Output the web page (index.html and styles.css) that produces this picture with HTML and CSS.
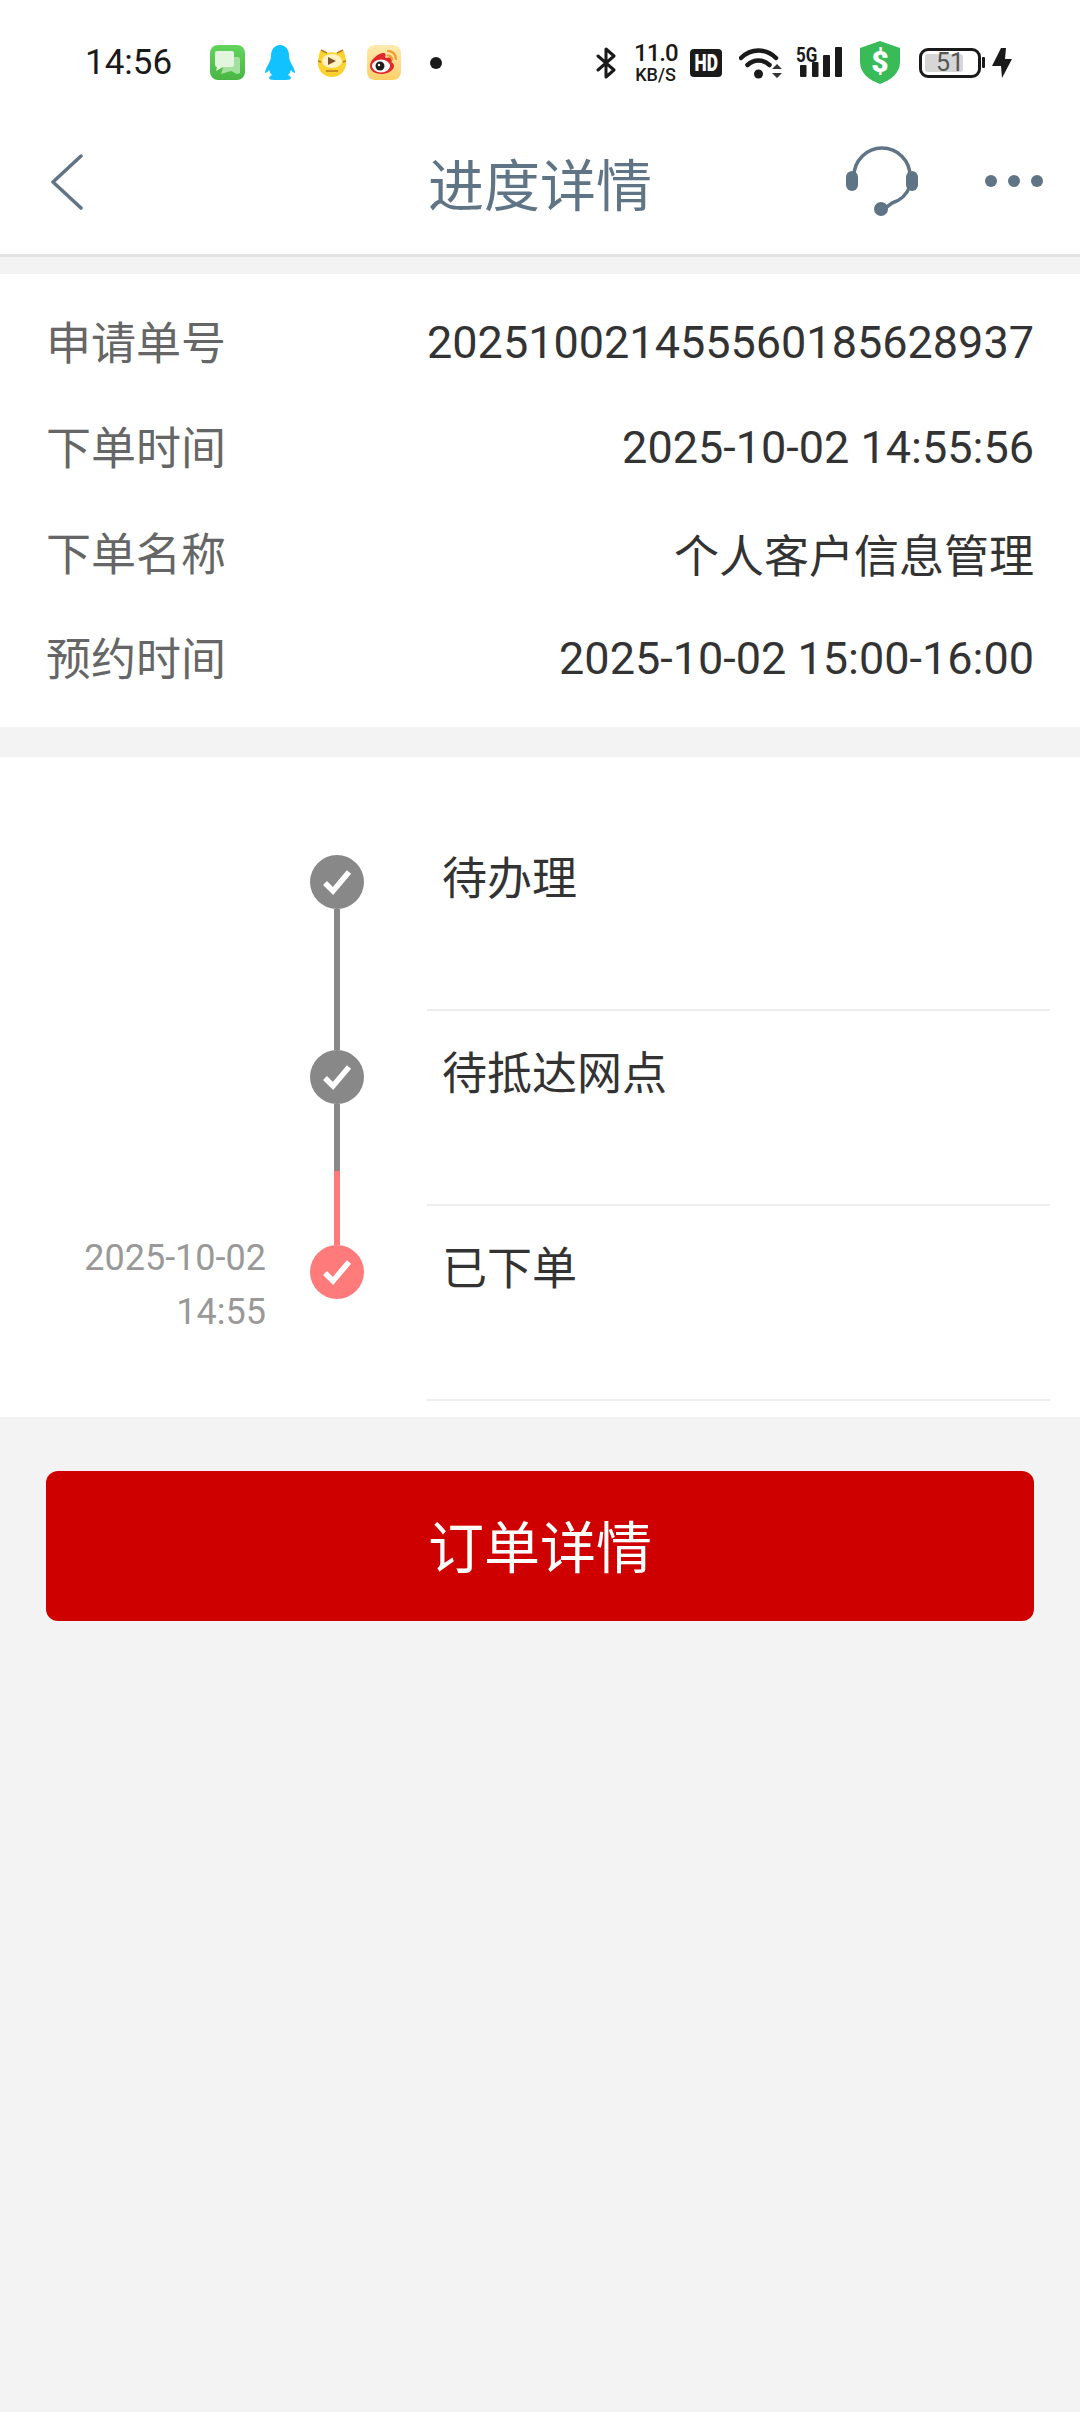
FILE: index.html
```html
<!DOCTYPE html>
<html lang="zh-CN">
<head>
    <meta charset="UTF-8">
    <meta name="viewport" content="width=device-width, initial-scale=1.0">
    <title>进度详情</title>
    <link rel="stylesheet" href="styles.css">
</head>
<body>
    <div class="status-bar">
        <span class="clock">14:56</span>
        <svg class="app app-msg" width="35" height="35" viewBox="0 0 35 35">
            <defs>
                <linearGradient id="msgBg" x1="0" y1="0" x2="0" y2="1">
                    <stop offset="0" stop-color="#62d45c"/>
                    <stop offset="1" stop-color="#49b644"/>
                </linearGradient>
            </defs>
            <rect width="35" height="35" rx="8" fill="url(#msgBg)"/>
            <path d="M13 12h15a2 2 0 0 1 2 2v14l-3 1-6-3-10 3 2-6z" fill="#a6dfa2"/>
            <path d="M7 6h15a2 2 0 0 1 2 2v12a2 2 0 0 1-2 2H13l-7 4 1-4a2 2 0 0 1-2-2V8a2 2 0 0 1 2-2z" fill="#e2f5df"/>
        </svg>
        <svg class="app app-qq" width="30" height="35" viewBox="0 0 30 35">
            <path d="M15 0c6 0 9 5 9 11 0 3 1 5 3 9 2 3 3 6 3 8-1 0-3-1-4-3-1 2-1 3-3 5 2 1 3 2 3 3 0 1-2 2-5 2h-12c-3 0-5-1-5-2 0-1 1-2 3-3-2-2-2-3-3-5-1 2-3 3-4 3 0-2 1-5 3-8 2-4 3-6 3-9C6 5 9 0 15 0z" fill="#12c2ff"/>
        </svg>
        <svg class="app app-tiger" width="28" height="28" viewBox="0 0 28 28">
            <path d="M3 1l6 3c3-1 7-1 10 0l6-3c2 3 3 8 3 13 0 8-6 14-14 14S0 22 0 14C0 9 1 4 3 1z" fill="#fdd22e"/>
            <path d="M3 1l6 3M25 1l-6 3M0 12l3 1M28 12l-3 1" stroke="#b8791f" stroke-width="1.500"/>
            <ellipse cx="14" cy="12" rx="10" ry="7" fill="#fff3c4"/>
            <path d="M10 8l8 4-8 4z" fill="#80502a"/>
            <path d="M8 22h12" stroke="#b8791f" stroke-width="1.500"/>
        </svg>
        <svg class="app app-weibo" width="34" height="35" viewBox="0 0 34 35">
            <defs>
                <linearGradient id="weiboBg" x1="0" y1="0" x2="0" y2="1">
                    <stop offset="0" stop-color="#ffeab0"/>
                    <stop offset="1" stop-color="#ffd069"/>
                </linearGradient>
            </defs>
            <rect width="34" height="35" rx="8" fill="url(#weiboBg)"/>
            <path d="M3 21c0-6 7-12 13-13 3 0 3 2 2 5 4-1 7-1 7 2 0 1 0 2-1 2 2 1 3 2 3 4 0 4-6 8-12 8-7 0-12-3-12-8z" fill="#e3262b"/>
            <ellipse cx="14" cy="21" rx="9" ry="6.500" fill="#fff"/>
            <circle cx="13" cy="21" r="4.500" fill="#1d1d1d"/>
            <circle cx="12" cy="20" r="1.200" fill="#fff"/>
            <path d="M21 6c4 0 8 3 8 8M21 10.500c2 0 4 1.500 4 4" fill="none" stroke="#f0992e" stroke-width="2.200" stroke-linecap="round"/>
        </svg>
        <span class="dot"></span>

        <div class="status-right">
            <svg class="sys-bt" width="21" height="32" viewBox="0 0 21 32">
                <path d="M2 9l16 14-8 7V2l8 7L2 23" fill="none" stroke="#1a1a1a" stroke-width="3" stroke-linejoin="round" stroke-linecap="round"/>
            </svg>
            <div class="speed">11.0<br><span class="speed-unit">KB/S</span></div>
            <div class="hd"><span>HD</span></div>
            <svg class="sys-wifi" width="43" height="33" viewBox="0 0 43 33">
                <path d="M2 12c10-10 25-10 35 0" fill="none" stroke="#1a1a1a" stroke-width="4.500" stroke-linecap="round"/>
                <path d="M8.500 19c6.500-6 15.500-6 22 0" fill="none" stroke="#1a1a1a" stroke-width="4.500" stroke-linecap="round"/>
                <circle cx="19.500" cy="28" r="4.500" fill="#1a1a1a"/>
                <path d="M33 23l5-5 5 5zM33 27l5 5 5-5z" fill="#333"/>
            </svg>
            <div class="signal">
                <span class="signal-5g"><span>5G</span></span>
                <svg width="46" height="32" viewBox="0 0 46 32">
                    <rect x="4" y="18" width="6.500" height="12" rx="1" fill="#1a1a1a"/>
                    <rect x="16" y="15" width="6.500" height="15" rx="1" fill="#1a1a1a"/>
                    <rect x="27" y="8" width="7" height="22" rx="1" fill="#1a1a1a"/>
                    <rect x="39" y="0" width="7" height="30" rx="1" fill="#1a1a1a"/>
                </svg>
            </div>
            <div class="shield">
                <svg width="40" height="43" viewBox="0 0 40 43">
                    <path d="M20 0l20 7v14c0 11-9 18-20 22C9 39 0 32 0 21V7z" fill="#39bb58"/>
                </svg>
                <span class="shield-sign">$</span>
            </div>
            <div class="battery">
                <div class="battery-body">
                    <div class="battery-fill"></div>
                    <span class="battery-num">51</span>
                </div>
                <div class="battery-tip"></div>
            </div>
            <svg class="sys-bolt" width="20" height="30" viewBox="0 0 20 30">
                <path d="M9 0h5l-1 11h7L10 30l-1-12H0z" fill="#1a1a1a"/>
            </svg>
        </div>
    </div>

    <header class="nav">
        <div class="nav-left">
            <svg width="33" height="56" viewBox="0 0 33 56">
                <path d="M31 2L3 28l28 26" fill="none" stroke="#5f7485" stroke-width="3.500" stroke-linecap="round" stroke-linejoin="round"/>
            </svg>
        </div>
        <h1 class="nav-title">进度详情</h1>
        <div class="nav-right">
            <svg width="72" height="70" viewBox="0 0 72 70">
                <path d="M8 30A28 28 0 0 1 64 30" fill="none" stroke="#5f7485" stroke-width="3.500"/>
                <path d="M64 40A28 28 0 0 1 46 57L38 63" fill="none" stroke="#5f7485" stroke-width="3.500"/>
                <rect x="0" y="25" width="12" height="20" rx="6" fill="#5f7485"/>
                <rect x="60" y="25" width="12" height="20" rx="6" fill="#5f7485"/>
                <circle cx="35" cy="63" r="7" fill="#5f7485"/>
            </svg>
            <div class="more">
                <span></span><span></span><span></span>
            </div>
        </div>
    </header>

    <section class="info">
        <div class="info-row">
            <span class="info-label">申请单号</span>
            <span class="info-value">202510021455560185628937</span>
        </div>
        <div class="info-row">
            <span class="info-label">下单时间</span>
            <span class="info-value">2025-10-02 14:55:56</span>
        </div>
        <div class="info-row">
            <span class="info-label">下单名称</span>
            <span class="info-value">个人客户信息管理</span>
        </div>
        <div class="info-row">
            <span class="info-label">预约时间</span>
            <span class="info-value">2025-10-02 15:00-16:00</span>
        </div>
    </section>

    <section class="timeline">
        <div class="step">
            <div class="step-time"></div>
            <div class="step-track">
                <div class="line line-top"></div>
                <div class="node">
                    <svg width="54" height="54" viewBox="0 0 54 54"><path d="M15 28l8 8 16-19" fill="none" stroke="#fff" stroke-width="5.500"/></svg>
                </div>
                <div class="line line-bottom line-gray"></div>
            </div>
            <div class="step-text">待办理</div>
        </div>
        <div class="step">
            <div class="step-time"></div>
            <div class="step-track">
                <div class="line line-top line-gray"></div>
                <div class="node">
                    <svg width="54" height="54" viewBox="0 0 54 54"><path d="M15 28l8 8 16-19" fill="none" stroke="#fff" stroke-width="5.500"/></svg>
                </div>
                <div class="line line-bottom line-split"></div>
            </div>
            <div class="step-text">待抵达网点</div>
        </div>
        <div class="step">
            <div class="step-time">2025-10-02<br>14:55</div>
            <div class="step-track">
                <div class="line line-top line-red"></div>
                <div class="node node-red">
                    <svg width="54" height="54" viewBox="0 0 54 54"><path d="M15 28l8 8 16-19" fill="none" stroke="#fff" stroke-width="5.500"/></svg>
                </div>
            </div>
            <div class="step-text">已下单</div>
        </div>
    </section>

    <div class="actions">
        <button class="detail-btn">订单详情</button>
    </div>
</body>
</html>
```
FILE: styles.css
```css
* {
    box-sizing: border-box;
}
body {
    margin: 0;
    min-height: 100vh;
    background-color: #f3f3f3;
    font-family: Roboto, "Noto Sans CJK SC", sans-serif;
    color: #333;
}

/* Status bar */
.status-bar {
    display: flex;
    align-items: center;
    height: 125px;
    padding: 0 68px 0 85px;
    background-color: #fff;
}
.clock {
    font-size: 35px;
    color: #1a1a1a;
}
.app-msg { margin-left: 38px; }
.app-qq { margin-left: 20px; }
.app-tiger { margin-left: 23px; }
.app-weibo { margin-left: 21px; }
.dot {
    width: 12px;
    height: 12px;
    margin-left: 29px;
    border-radius: 50%;
    background-color: #1a1a1a;
}
.status-right {
    display: flex;
    align-items: center;
    margin-left: auto;
}
.speed {
    width: 43px;
    margin-left: 17px;
    padding-top: 2px;
    color: #1a1a1a;
    font-size: 24px;
    font-weight: 500;
    line-height: 20px;
    letter-spacing: -1px;
    text-align: center;
}
.speed-unit {
    font-size: 18px;
    letter-spacing: 0;
}
.hd {
    display: flex;
    align-items: center;
    justify-content: center;
    width: 32px;
    height: 28px;
    margin-left: 13px;
    border-radius: 4px;
    background-color: #1a1a1a;
    color: #fff;
    font-size: 24px;
    font-weight: 900;
}
.hd span {
    transform: scaleX(0.72);
}
.sys-wifi { margin-left: 17px; }
.signal {
    position: relative;
    width: 46px;
    height: 32px;
    margin-left: 14px;
}
.signal svg {
    display: block;
}
.signal-5g {
    position: absolute;
    top: -1px;
    left: 0;
    font-size: 20px;
    line-height: 18px;
    font-weight: 700;
    color: #1a1a1a;
}
.signal-5g span {
    display: inline-block;
    transform: scaleX(0.85);
    transform-origin: left;
}
.shield {
    position: relative;
    height: 43px;
    margin-left: 18px;
}
.shield svg {
    display: block;
}
.shield-sign {
    position: absolute;
    top: 0;
    left: 0;
    width: 40px;
    color: #fff;
    font-size: 30px;
    line-height: 42px;
    font-weight: 900;
    text-align: center;
}
.battery {
    display: flex;
    align-items: center;
    margin-left: 19px;
}
.battery-body {
    position: relative;
    width: 62px;
    height: 30px;
    padding: 3px;
    border: 3px solid #1a1a1a;
    border-radius: 9px;
}
.battery-fill {
    width: 75%;
    height: 100%;
    border-radius: 3px;
    background-color: #d6d6d6;
}
.battery-num {
    position: absolute;
    top: 0;
    left: 0;
    width: 100%;
    color: #555;
    font-size: 25px;
    line-height: 24px;
    text-align: center;
}
.battery-tip {
    width: 3px;
    height: 11px;
    margin-left: 1px;
    border-radius: 1px;
    background-color: #1a1a1a;
}
.sys-bolt { margin-left: 7px; }

/* Title bar */
.nav {
    display: grid;
    grid-template-columns: 1fr auto 1fr;
    align-items: center;
    height: 132px;
    padding: 0 37px 17px;
    background-color: #fff;
    border-bottom: 3px solid #e4e4e4;
}
.nav-left {
    padding: 2px 0 0 13px;
}
.nav-left svg,
.nav-right svg {
    display: block;
}
.nav-title {
    margin: 0;
    font-size: 56px;
    font-weight: 400;
    color: #5f7485;
}
.nav-right {
    display: flex;
    align-items: center;
    justify-content: flex-end;
    gap: 67px;
}
.more {
    display: flex;
    gap: 11px;
}
.more span {
    width: 12px;
    height: 12px;
    border-radius: 50%;
    background-color: #5f7485;
}

/* Order info */
.info {
    margin-top: 17px;
    padding: 15px 46px 16px;
    background-color: #fff;
}
.info-row {
    display: flex;
    align-items: center;
    justify-content: space-between;
    height: 105.5px;
    font-size: 45px;
}
.info-label {
    padding-bottom: 3px;
    color: #666;
}
.info-value {
    padding-top: 1px;
}

/* Progress list */
.timeline {
    margin-top: 30px;
    padding: 59px 30px 16px 0;
    background-color: #fff;
}
.step {
    display: grid;
    grid-template-columns: 266px 54px 1fr;
    column-gap: 44px;
    height: 195px;
}
.step-time {
    padding-top: 25px;
    color: #999;
    font-size: 36px;
    line-height: 54px;
    text-align: right;
}
.step-track {
    display: flex;
    flex-direction: column;
    align-items: center;
}
.line {
    width: 6px;
}
.line-top {
    height: 39px;
}
.line-bottom {
    flex: 1;
}
.line-gray {
    background-color: #888;
}
.line-red {
    background-color: #ff7b7b;
}
.line-split {
    background: linear-gradient(#888 67px, #ff7b7b 67px);
}
.node {
    width: 54px;
    height: 54px;
    flex-shrink: 0;
    border-radius: 50%;
    background-color: #888;
}
.node svg {
    display: block;
}
.node-red {
    background-color: #ff7b7b;
}
.step-text {
    margin-left: 19px;
    padding: 37px 0 0 15px;
    border-bottom: 2px solid #eee;
    font-size: 45px;
    line-height: 54px;
}

/* Bottom button */
.actions {
    padding: 54px 46px 0;
}
.detail-btn {
    display: block;
    width: 100%;
    height: 150px;
    padding: 0 0 6px;
    border: none;
    border-radius: 12px;
    background-color: #cf0000;
    color: #fff;
    font-family: inherit;
    font-size: 56px;
}
```
